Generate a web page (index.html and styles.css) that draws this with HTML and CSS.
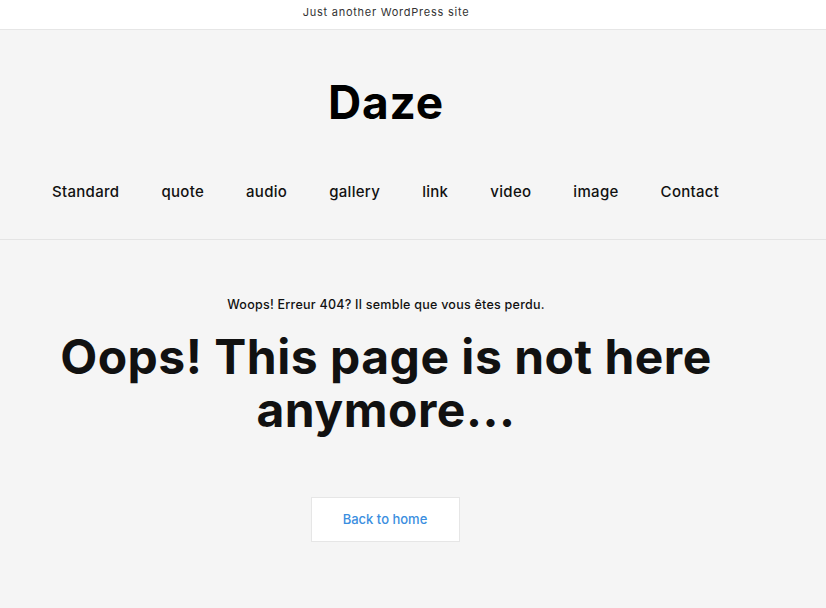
FILE: index.html
```html
<!DOCTYPE html>
<html lang="en">
<head>
    <meta charset="UTF-8">
    <title>Page not found – Daze</title>
    <link rel="stylesheet" href="styles.css">
</head>
<body>
    <div class="topbar">
        <div class="wrap">
            <p class="tagline">Just another WordPress site</p>
        </div>
    </div>

    <header class="site-header">
        <div class="wrap">
            <h1 class="site-title">Daze</h1>
            <nav class="main-nav">
                <a href="#">Standard</a>
                <a href="#">quote</a>
                <a href="#">audio</a>
                <a href="#">gallery</a>
                <a href="#">link</a>
                <a href="#">video</a>
                <a href="#">image</a>
                <a href="#">Contact</a>
            </nav>
        </div>
    </header>

    <main class="error-page">
        <div class="wrap">
            <p class="error-sub">Woops! Erreur 404? Il semble que vous êtes perdu.</p>
            <h2 class="error-title">Oops! This page is not here anymore...</h2>
            <a class="btn-home" href="#">Back to home</a>
        </div>
    </main>
</body>
</html>
```

FILE: styles.css
```css
body {
    margin: 0;
    font-family: Inter, "Noto Sans", sans-serif;
    background-color: #f5f5f5;
    color: #111;
}
a {
    text-decoration: none;
    color: inherit;
}
.wrap {
    width: 772px;
    text-align: center;
}

/* top bar */
.topbar {
    background-color: #fff;
    border-bottom: 1px solid #e6e6e6;
}
.tagline {
    margin: 0;
    height: 29px;
    line-height: 25px;
    font-size: 11px;
    letter-spacing: 0.75px;
    color: #333;
}

/* header */
.site-header {
    border-bottom: 1px solid #e4e4e4;
}
.site-header .wrap {
    padding: 44px 0 37px;
}
.site-title {
    margin: 0;
    font-size: 46px;
    line-height: 56px;
    font-weight: 700;
    letter-spacing: 0.8px;
    color: #000;
}
.main-nav {
    display: flex;
    gap: 42px;
    padding-left: 52px;
    margin-top: 52px;
}
.main-nav a {
    font-size: 15px;
    line-height: 20px;
    font-weight: 500;
    letter-spacing: 0.3px;
    color: #111;
}

/* 404 */
.error-page .wrap {
    padding: 56px 0 66px;
}
.error-sub {
    margin: 0;
    font-size: 12.5px;
    line-height: 18px;
    font-weight: 500;
    letter-spacing: 0.25px;
    color: #111;
}
.error-title {
    margin: 16px auto 0;
    width: 700px;
    font-size: 48px;
    line-height: 53px;
    font-weight: 700;
    letter-spacing: 0.5px;
    color: #111;
}
.btn-home {
    display: inline-block;
    margin-top: 61px;
    margin-left: -2px;
    width: 147px;
    height: 43px;
    line-height: 43px;
    background-color: #fff;
    border: 1px solid #e6e6e6;
    font-size: 13px;
    font-weight: 500;
    color: #3a8ee0;
}
```
